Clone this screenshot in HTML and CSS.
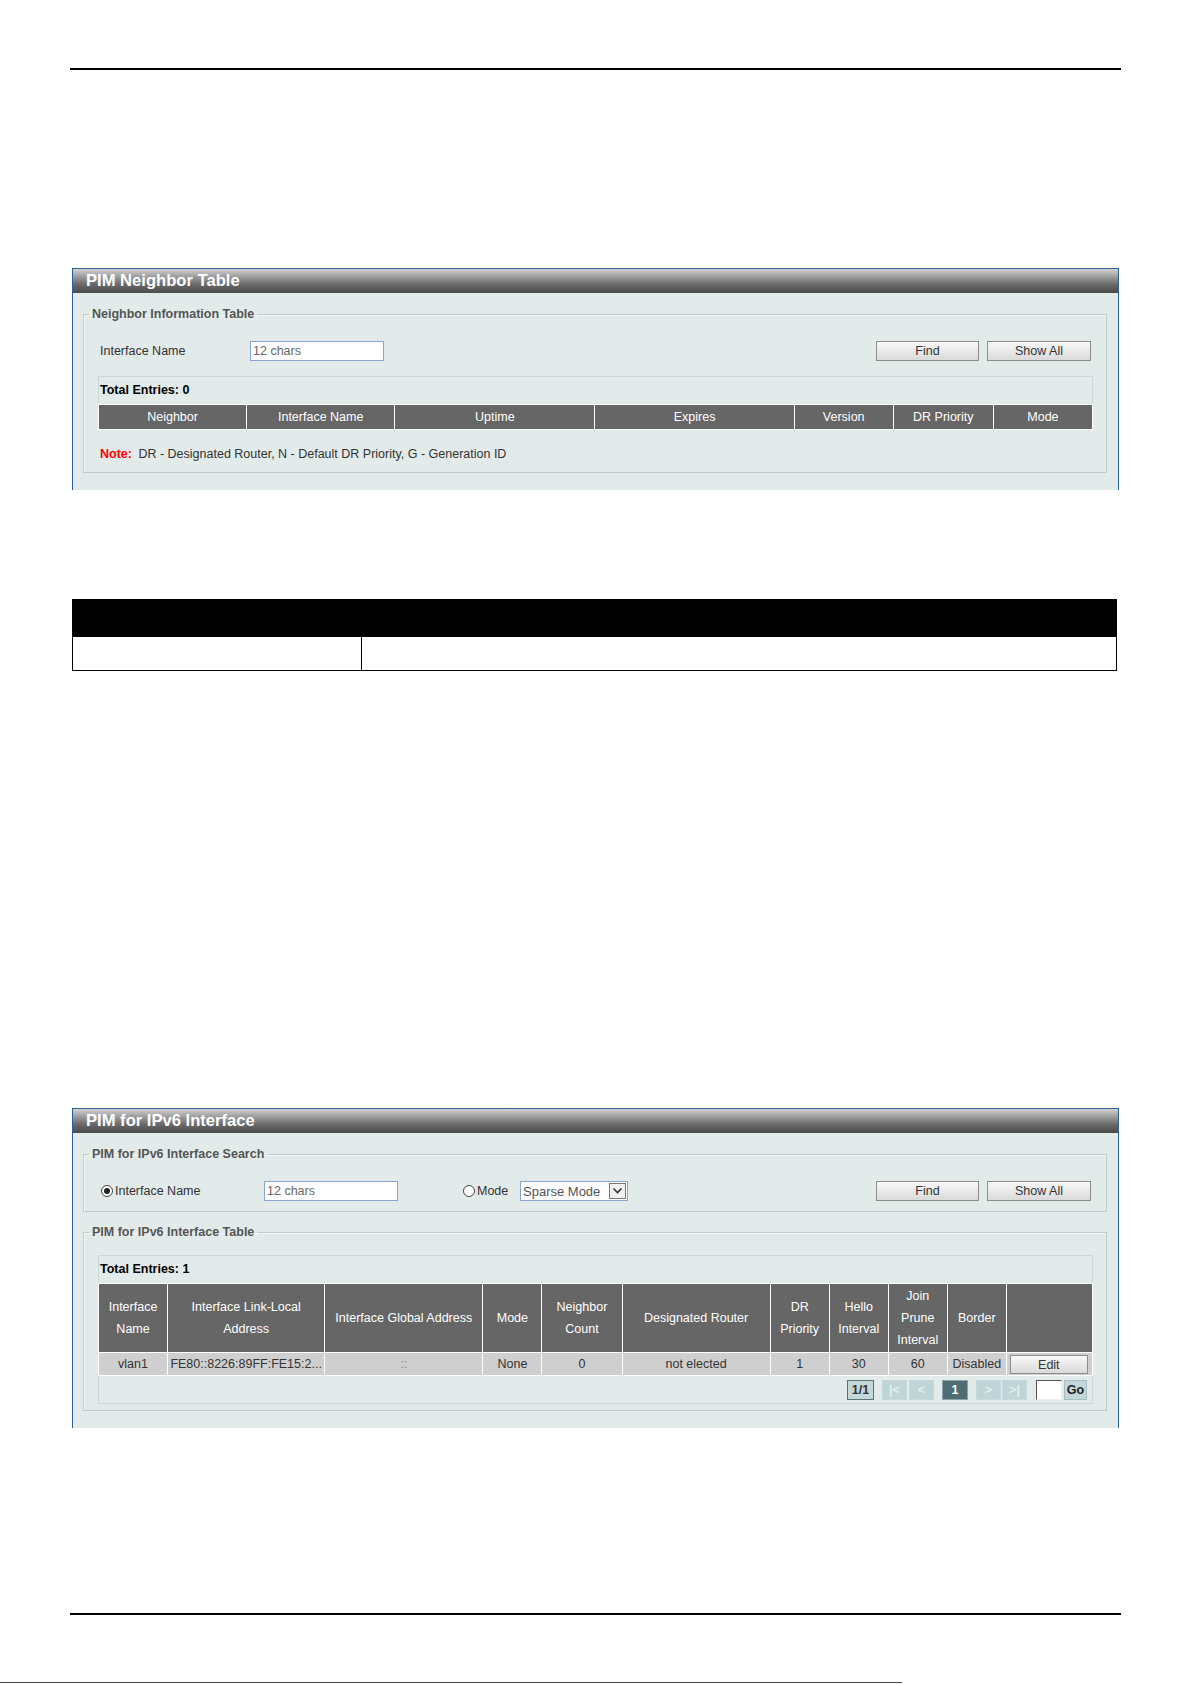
FILE: index.html
```html
<!DOCTYPE html>
<html lang="en">
<head>
    <meta charset="UTF-8">
    <title>PIM for IPv6</title>
    <link rel="stylesheet" href="styles.css">
</head>
<body>
    <div class="page">
        <div class="rule"></div>

        <!-- PIM neighbor table -->
        <div class="panel panel-neighbor">
            <div class="panel-title">PIM Neighbor Table</div>
            <fieldset class="group group-neighbor">
                <legend>Neighbor Information Table</legend>
                <div class="form-row">
                    <span class="label">Interface Name</span>
                    <input class="text-input" type="text" value="12 chars">
                    <span class="spacer"></span>
                    <button class="btn">Find</button>
                    <button class="btn">Show All</button>
                </div>
                <div class="entries">
                    <div class="entries-total">Total Entries: 0</div>
                    <table class="grid">
                        <colgroup>
                            <col style="width:148px"><col style="width:148px"><col style="width:200px">
                            <col style="width:199px"><col style="width:99px"><col style="width:100px"><col style="width:99px">
                        </colgroup>
                        <tr class="head-single">
                            <th>Neighbor</th>
                            <th>Interface Name</th>
                            <th>Uptime</th>
                            <th>Expires</th>
                            <th>Version</th>
                            <th>DR Priority</th>
                            <th>Mode</th>
                        </tr>
                    </table>
                </div>
                <div class="note"><span class="note-label">Note:</span> DR - Designated Router, N - Default DR Priority, G - Generation ID</div>
            </fieldset>
        </div>

        <!-- parameter table -->
        <table class="param-table">
            <tr><th class="param-name"></th><th></th></tr>
            <tr><td></td><td></td></tr>
        </table>

        <!-- PIM for IPv6 interface -->
        <div class="panel panel-interface">
            <div class="panel-title">PIM for IPv6 Interface</div>
            <fieldset class="group group-search">
                <legend>PIM for IPv6 Interface Search</legend>
                <div class="form-row">
                    <span class="radio checked"></span>
                    <span class="radio-label label-name">Interface Name</span>
                    <input class="text-input input-name" type="text" value="12 chars">
                    <span class="radio radio-mode"></span>
                    <span class="radio-label label-mode">Mode</span>
                    <div class="select">
                        <span class="select-text">Sparse Mode</span>
                        <span class="select-arrow">
                            <svg width="11" height="8" viewBox="0 0 11 8"><path d="M1.5 1.5 L5.5 5.5 L9.5 1.5" fill="none" stroke="#333" stroke-width="1.6"/></svg>
                        </span>
                    </div>
                    <span class="spacer"></span>
                    <button class="btn">Find</button>
                    <button class="btn">Show All</button>
                </div>
            </fieldset>

            <fieldset class="group group-table">
                <legend>PIM for IPv6 Interface Table</legend>
                <div class="entries entries-full">
                    <div class="entries-total">Total Entries: 1</div>
                    <table class="grid">
                        <colgroup>
                            <col style="width:69px"><col style="width:157px"><col style="width:158px"><col style="width:59px">
                            <col style="width:80px"><col style="width:148px"><col style="width:59px"><col style="width:59px">
                            <col style="width:59px"><col style="width:59px"><col style="width:86px">
                        </colgroup>
                        <tr class="head-multi">
                            <th>Interface<br>Name</th>
                            <th>Interface Link-Local<br>Address</th>
                            <th>Interface Global Address</th>
                            <th>Mode</th>
                            <th>Neighbor<br>Count</th>
                            <th>Designated Router</th>
                            <th>DR<br>Priority</th>
                            <th>Hello<br>Interval</th>
                            <th>Join<br>Prune<br>Interval</th>
                            <th>Border</th>
                            <th></th>
                        </tr>
                        <tr class="data-row">
                            <td>vlan1</td>
                            <td>FE80::8226:89FF:FE15:2...</td>
                            <td class="muted">::</td>
                            <td>None</td>
                            <td>0</td>
                            <td>not elected</td>
                            <td>1</td>
                            <td>30</td>
                            <td>60</td>
                            <td>Disabled</td>
                            <td class="cell-btn"><button class="btn btn-edit">Edit</button></td>
                        </tr>
                    </table>
                    <div class="pager">
                        <span class="pg pg-count">1/1</span>
                        <span class="pg pg-off pg-first">|&lt;</span>
                        <span class="pg pg-off">&lt;</span>
                        <span class="pg pg-current">1</span>
                        <span class="pg pg-off pg-next">&gt;</span>
                        <span class="pg pg-off pg-last">&gt;|</span>
                        <input class="pg-input" type="text">
                        <span class="pg pg-go">Go</span>
                    </div>
                </div>
            </fieldset>
        </div>

        <div class="rule rule-bottom"></div>
    </div>
    <div class="page-edge"></div>
</body>
</html>
```

FILE: styles.css
```css
body {
    margin: 0;
    background-color: #fff;
    font-family: "Liberation Sans", Arial, sans-serif;
    font-size: 12.5px;
    color: #333;
}

.page {
    width: 1051px;
    margin-left: 70px;
    padding-top: 68px;
}

.rule {
    height: 2px;
    background-color: #000;
}

.rule-bottom {
    margin-top: 185px;
}

.page-edge {
    width: 902px;
    height: 1px;
    margin-top: 67px;
    background-color: #444;
}

/* window-like panel */
.panel {
    margin: 0 2px;
    border: 1px solid #2c5f95;
    border-bottom: none;
    background-color: #e2eaea;
}

.panel-neighbor {
    margin-top: 198px;
    height: 221px;
}

.panel-interface {
    margin-top: 437px;
    height: 319px;
}

.panel-title {
    height: 24px;
    line-height: 23px;
    padding-left: 13px;
    font-size: 16.6px;
    font-weight: bold;
    color: #fff;
    background: linear-gradient(to bottom, #d2d2d2 0%, #a0a0a0 30%, #686868 65%, #4c4c4c 100%);
}

.group {
    margin: 14px 11px 0 10px;
    padding: 0 13px 0 14px;
    border: 1px solid #c4cdcd;
    box-shadow: inset 1px 1px 0 #f2f6f6;
    min-width: 0;
}

.group legend {
    margin-left: -9px;
    padding: 0 3px;
    font-weight: bold;
    font-size: 12.5px;
    line-height: 14px;
    color: #555;
}

.group-neighbor {
    height: 164px;
}

.group-search {
    height: 63px;
}

.group-table {
    margin-top: 13px;
    height: 184px;
}

.form-row {
    display: flex;
    align-items: center;
    height: 20px;
    margin-top: 20px;
    padding: 0 2px;
}

.label {
    width: 150px;
    color: #333;
}

.spacer {
    flex: 1;
}

.text-input {
    box-sizing: border-box;
    width: 134px;
    height: 20px;
    margin: 0;
    padding: 0 2px;
    border: 1px solid #86a6cc;
    font-family: "Liberation Sans", Arial, sans-serif;
    font-size: 12.5px;
    color: #666;
    background: #fff;
}

.btn {
    box-sizing: border-box;
    width: 103px;
    height: 20px;
    margin: 0 0 0 8px;
    padding: 0;
    border: 1px solid #8c8c8c;
    background: linear-gradient(to bottom, #f8f8f8, #dadada);
    font-family: "Liberation Sans", Arial, sans-serif;
    font-size: 12.5px;
    color: #333;
}

.btn:last-child {
    width: 104px;
}

/* radio buttons and select of the search row */
.radio {
    box-sizing: border-box;
    display: inline-block;
    width: 12px;
    height: 12px;
    border: 1px solid #444;
    border-radius: 50%;
    background: #fff;
    position: relative;
    margin-left: 1px;
}

.radio.checked::after {
    content: "";
    position: absolute;
    left: 2px;
    top: 2px;
    width: 6px;
    height: 6px;
    border-radius: 50%;
    background: #222;
}

.radio-label {
    margin-left: 2px;
}

.label-name {
    width: 149px;
}

.input-name {
    margin-right: 65px;
}

.radio-mode {
    margin-left: 0;
}

.label-mode {
    width: 43px;
}

.select {
    box-sizing: border-box;
    display: flex;
    align-items: center;
    width: 108px;
    height: 20px;
    border: 1px solid #86a6cc;
    background: #fff;
    padding-left: 2px;
}

.select-text {
    flex: 1;
    font-size: 13px;
    color: #555;
}

.select-arrow {
    box-sizing: border-box;
    display: flex;
    align-items: center;
    justify-content: center;
    width: 17px;
    height: 16px;
    margin-right: 1px;
    border: 1px solid #777;
    background: #f0f0f0;
}

/* result tables */
.entries {
    margin-top: 15px;
    border: 1px solid #cfd8d8;
    border-bottom: none;
}

.entries-full {
    margin-top: 16px;
    border-bottom: 1px solid #cfd8d8;
}

.entries-total {
    height: 27px;
    line-height: 27px;
    padding-left: 1px;
    font-weight: bold;
    color: #000;
}

.grid {
    width: 995px;
    margin-left: -1px;
    border-collapse: collapse;
    table-layout: fixed;
}

.grid th {
    padding: 0;
    border: 1px solid #fff;
    background-color: #666;
    color: #fff;
    font-weight: normal;
    text-align: center;
}

.head-single th {
    height: 24px;
}

.head-multi th {
    height: 68px;
    line-height: 22px;
}

.data-row td {
    height: 22px;
    padding: 0;
    border: 1px solid #fff;
    background-color: #cfcfcf;
    text-align: center;
    color: #333;
    white-space: nowrap;
    overflow: hidden;
}

.data-row td.muted {
    color: #888;
}

.btn-edit.btn {
    width: 78px;
    height: 19px;
    margin: 1px 0 0 3px;
    display: block;
}

.note {
    margin-top: 17px;
    padding-left: 2px;
    color: #333;
}

.note-label {
    color: #f00;
    font-weight: bold;
    margin-right: 3px;
}

/* pagination */
.pager {
    display: flex;
    justify-content: flex-end;
    align-items: center;
    height: 27px;
    padding-right: 5px;
}

.pg {
    box-sizing: border-box;
    width: 25px;
    height: 20px;
    line-height: 18px;
    margin-left: 2px;
    text-align: center;
    font-weight: bold;
    border: 1px solid #c6d9dc;
    background-color: #bfd4d7;
    color: #e3eeef;
}

.pg-count {
    width: 27px;
    margin-left: 0;
    border-color: #58767a;
    background-color: #c6d7d9;
    color: #333;
}

.pg-first {
    margin-left: 8px;
}

.pg-current {
    width: 26px;
    margin-left: 8px;
    border-color: #8aa3a6;
    background-color: #4f6d72;
    color: #fff;
}

.pg-next {
    margin-left: 8px;
}

.pg-last {
    margin-left: 1px;
}

.pg-input {
    box-sizing: border-box;
    width: 26px;
    height: 20px;
    margin: 0 0 0 9px;
    padding: 0;
    border: 1px solid #eee;
    border-top-color: #555;
    border-left-color: #555;
    background: #fff;
}

.pg-go {
    width: 23px;
    margin-left: 2px;
    border-color: #a8bec1;
    background-color: #c3d6d9;
    color: #222;
    font-weight: bold;
}

/* parameter table */
.param-table {
    width: 1045px;
    margin: 109px 0 0 2px;
    border-collapse: collapse;
    border: 1px solid #000;
}

.param-table th {
    height: 36px;
    padding: 0;
    background-color: #000;
}

.param-table .param-name {
    width: 288px;
}

.param-table td {
    height: 33px;
    padding: 0;
    border: 1px solid #000;
}
```
